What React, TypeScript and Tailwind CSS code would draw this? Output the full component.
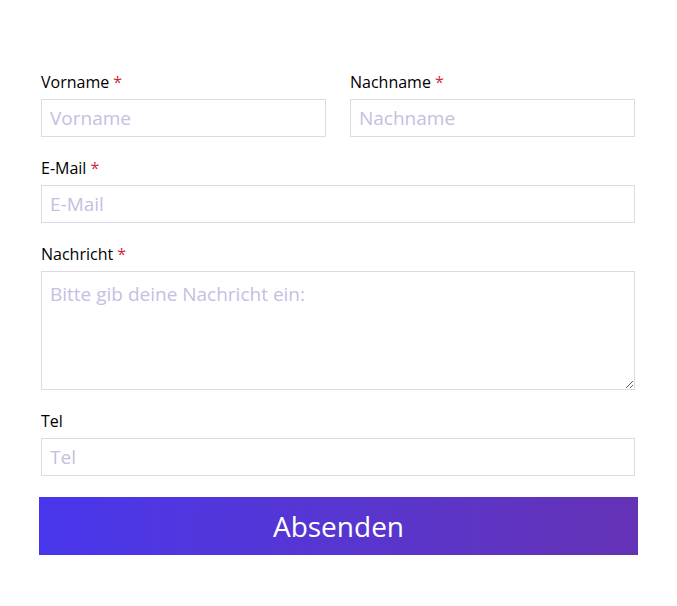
import React from "react";

const font = { fontFamily: '"Open Sans", "Noto Sans", sans-serif' };

function Label({ text, required }: { text: string; required?: boolean }) {
  return (
    <label className="block h-[21px] mb-[6px] text-[16px] leading-[21px] text-black">
      {text}
      {required && <span className="ml-[4px] text-[#d2283c]">*</span>}
    </label>
  );
}

const inputCls =
  "block w-full h-[38px] border border-[#dcdbe3] bg-white px-[8px] text-[19px] text-black outline-none placeholder:text-[#c4c0e2]";

export default function App() {
  return (
    <div className="w-[677px] h-[606px] bg-white" style={font}>
      <form className="ml-[41px] w-[594px] pt-[72px]" onSubmit={(e) => e.preventDefault()}>
        <div className="grid grid-cols-2 gap-x-[24px]">
          <div>
            <Label text="Vorname" required />
            <input className={inputCls} placeholder="Vorname" />
          </div>
          <div>
            <Label text="Nachname" required />
            <input className={inputCls} placeholder="Nachname" />
          </div>
        </div>
        <div className="mt-[21px]">
          <Label text="E-Mail" required />
          <input className={inputCls} placeholder="E-Mail" />
        </div>
        <div className="mt-[21px]">
          <Label text="Nachricht" required />
          <textarea
            className="block w-full h-[119px] border border-[#dcdbe3] bg-white px-[8px] py-[9px] text-[19px] leading-[26px] text-black outline-none placeholder:text-[#c4c0e2]"
            placeholder="Bitte gib deine Nachricht ein:"
          />
        </div>
        <div className="mt-[21px]">
          <Label text="Tel" />
          <input className={inputCls} placeholder="Tel" />
        </div>
        <button
          type="submit"
          className="mt-[21px] -ml-[2px] w-[599px] h-[58px] bg-gradient-to-r from-[#4836ec] to-[#6432b5] text-white text-[28px] leading-[58px]"
        >
          Absenden
        </button>
      </form>
    </div>
  );
}
